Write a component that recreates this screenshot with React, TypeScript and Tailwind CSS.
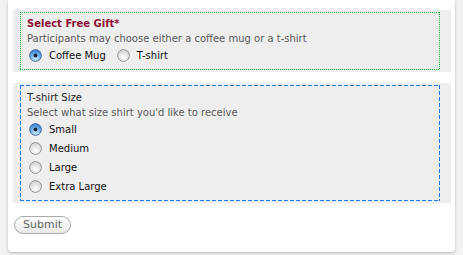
import React from "react";

function Radio({ checked }: { checked?: boolean }) {
  return (
    <svg width="13" height="13" viewBox="0 0 13 13" className="shrink-0">
      <defs>
        <radialGradient id="rg-off" cx="50%" cy="70%" r="60%">
          <stop offset="0%" stopColor="#ffffff" />
          <stop offset="100%" stopColor="#d6d6d6" />
        </radialGradient>
        <radialGradient id="rg-on" cx="50%" cy="75%" r="65%">
          <stop offset="0%" stopColor="#cfe8ff" />
          <stop offset="55%" stopColor="#7fb8ee" />
          <stop offset="100%" stopColor="#3d82d4" />
        </radialGradient>
      </defs>
      <circle
        cx="6.5"
        cy="6.5"
        r="5.9"
        fill={checked ? "url(#rg-on)" : "url(#rg-off)"}
        stroke={checked ? "#4d6c95" : "#8a8a8a"}
        strokeWidth="0.9"
      />
      {checked && <circle cx="6.5" cy="6.5" r="2" fill="#1b2838" />}
    </svg>
  );
}

function Option({ label, checked }: { label: string; checked?: boolean }) {
  return (
    <label className="flex h-[19px] items-center">
      <span className="ml-[2px]">
        <Radio checked={checked} />
      </span>
      <span className="ml-[7px] text-[#111]">{label}</span>
    </label>
  );
}

export default function App() {
  return (
    <div
      className="min-h-screen bg-[#f2f2f2] text-[10px] leading-[15px]"
      style={{ fontFamily: '"DejaVu Sans", Verdana, sans-serif' }}
    >
      <div className="ml-[8px] w-[447px] rounded-b-[4px] bg-white pt-[10px] pb-[18px] pl-[5px] pr-[4px] shadow-[0_1px_3px_rgba(0,0,0,0.25)]">
        <div className="bg-[#eeeeee] py-[2px] pl-[7px]">
          <div className="w-[420px] bg-[repeating-linear-gradient(90deg,#00b52e_0_1px,transparent_1px_2px),repeating-linear-gradient(90deg,#00b52e_0_1px,transparent_1px_2px),repeating-linear-gradient(180deg,#00b52e_0_1px,transparent_1px_2px),repeating-linear-gradient(180deg,#00b52e_0_1px,transparent_1px_2px)] bg-[size:100%_1px,100%_1px,1px_100%,1px_100%] bg-[position:left_top,left_bottom,left_top,right_top] bg-no-repeat pt-[4px] pb-[5px] pl-[7px]">
            <div className="font-bold text-[#8c1238]">Select Free Gift*</div>
            <div className="text-[#5a5a5a]">Participants may choose either a coffee mug or a t-shirt</div>
            <div className="flex items-center gap-[9px]">
              <Option label="Coffee Mug" checked />
              <Option label="T-shirt" />
            </div>
          </div>
        </div>

        <div className="mt-[11px] bg-[#eeeeee] py-[2px] pl-[7px]">
          <div className="w-[420px] bg-[repeating-linear-gradient(90deg,#1479ee_0_4px,transparent_4px_6px),repeating-linear-gradient(90deg,#1479ee_0_4px,transparent_4px_6px),repeating-linear-gradient(180deg,#1479ee_0_4px,transparent_4px_6px),repeating-linear-gradient(180deg,#1479ee_0_4px,transparent_4px_6px)] bg-[size:100%_1px,100%_1px,1px_100%,1px_100%] bg-[position:left_top,left_bottom,left_top,right_top] bg-no-repeat pt-[5px] pb-[5px] pl-[7px]">
            <div className="text-[#222]">T-shirt Size</div>
            <div className="text-[#5a5a5a]">Select what size shirt you'd like to receive</div>
            <div className="flex flex-col">
              <Option label="Small" checked />
              <Option label="Medium" />
              <Option label="Large" />
              <Option label="Extra Large" />
            </div>
          </div>
        </div>

        <div className="mt-[13px] pl-[1px]">
          <button className="h-[18px] rounded-full border border-[#a9a9a9] bg-gradient-to-b from-white to-[#e9e9e9] px-[8px] text-[11px] leading-[16px] text-[#666]">
            Submit
          </button>
        </div>
      </div>
    </div>
  );
}
